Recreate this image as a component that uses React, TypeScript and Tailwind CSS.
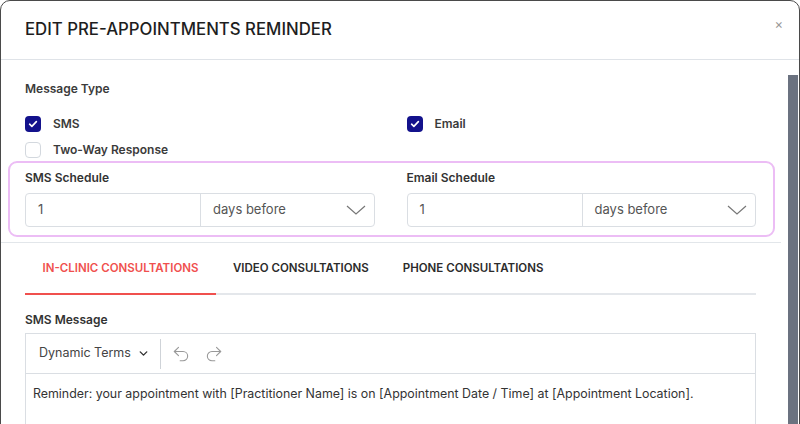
import { Undo2, Redo2, ChevronDown } from 'lucide-react';

const font = { fontFamily: 'Inter, "Liberation Sans", sans-serif' };

function Check({ checked, label }: { checked?: boolean; label: string }) {
  return (
    <div className="flex flex-1 items-center gap-[12px]">
      {checked ? (
        <span className="flex h-[16px] w-[16px] items-center justify-center rounded-[4px] bg-[#13128c]">
          <svg viewBox="0 0 16 16" className="h-[12px] w-[12px]">
            <path d="M3.5 8.3l3 2.8 6-6.2" fill="none" stroke="white" strokeWidth="2.2" strokeLinecap="round" strokeLinejoin="round" />
          </svg>
        </span>
      ) : (
        <span className="h-[16px] w-[16px] rounded-[4px] border border-[#d3d8de] bg-white" />
      )}
      <span className="text-[12px] font-semibold text-[#3b3b3b]">{label}</span>
    </div>
  );
}

function Schedule({ label }: { label: string }) {
  return (
    <div className="flex flex-1 flex-col">
      <span className="text-[12px] font-semibold text-[#333]">{label}</span>
      <div className="mt-[6px] flex h-[34px] rounded-[4px] border border-[#dadee3]">
        <div className="flex w-[175px] items-center border-r border-[#dadee3] pl-[12px] text-[13px] text-[#555]">1</div>
        <div className="flex flex-1 items-center justify-between pl-[12px] pr-[8px] text-[13px] text-[#555]">
          <span>days before</span>
          <svg viewBox="0 0 20 10" className="h-[10px] w-[20px]">
            <polyline points="1,1 10,9 19,1" fill="none" stroke="#777" strokeWidth="1.2" />
          </svg>
        </div>
      </div>
    </div>
  );
}

export default function App() {
  return (
    <div style={font} className="h-[424px] w-[800px] overflow-hidden bg-white">
      <div className="flex h-[440px] flex-col rounded-[10px] border border-[#4a4a4a] bg-white">
        <div className="flex h-[59px] shrink-0 items-center justify-between border-b border-[#dfe3e8] pl-[24px] pr-[16px]">
          <h1 className="text-[16.8px] font-medium text-[#1e1e1e]">EDIT PRE-APPOINTMENTS REMINDER</h1>
          <span className="mb-[10px] text-[13px] text-[#999]">×</span>
        </div>

        <div className="flex flex-1">
          <div className="flex-1">
            <div className="pl-[24px] pr-[25px]">
              <div className="pt-[20px] text-[12px] font-semibold text-[#3b3b3b]">Message Type</div>
              <div className="mt-[17px] flex gap-[32px]">
                <Check checked label="SMS" />
                <Check checked label="Email" />
              </div>
              <div className="mt-[8px]">
                <Check label="Two-Way Response" />
              </div>
              <div className="-ml-[17px] -mr-[19px] mt-[2px] flex gap-[32px] rounded-[9px] border-2 border-[#ecbdf5] pb-[8px] pl-[15px] pr-[17px] pt-[6px]">
                <Schedule label="SMS Schedule" />
                <Schedule label="Email Schedule" />
              </div>
            </div>

            <div className="mt-[5px] border-t border-[#e2e6ea]" />

            <div className="pl-[24px] pr-[25px]">
              <div className="mt-[17px] flex border-b-2 border-[#e4e7eb] text-[11.5px] font-semibold text-[#2b2b2b]">
                <div className="-mb-[2px] w-[191px] border-b-2 border-[#f0504e] pb-[16px] text-center text-[#f0504e]">IN-CLINIC CONSULTATIONS</div>
                <div className="pl-[17px] pb-[16px]">VIDEO CONSULTATIONS</div>
                <div className="pl-[34px] pb-[16px]">PHONE CONSULTATIONS</div>
              </div>

              <div className="mt-[16px] text-[12px] font-semibold text-[#333]">SMS Message</div>
              <div className="mt-[4px] border border-[#dadee3]">
                <div className="flex h-[40px] items-center border-b border-[#dadee3] pl-[13px]">
                  <span className="text-[12.5px] text-[#444]">Dynamic Terms</span>
                  <ChevronDown className="ml-[6px] h-[13px] w-[13px] text-[#333]" strokeWidth={2.6} />
                  <span className="ml-[10px] h-[30px] w-px bg-[#cfd3d8]" />
                  <Undo2 className="ml-[10px] h-[20px] w-[20px] text-[#999]" strokeWidth={1.3} />
                  <Redo2 className="ml-[13px] h-[20px] w-[20px] text-[#999]" strokeWidth={1.3} />
                </div>
                <div className="h-[60px] px-[7px] pt-[11px] text-[12.4px] text-[#333]">
                  Reminder: your appointment with [Practitioner Name] is on [Appointment Date / Time] at [Appointment Location].
                </div>
              </div>
            </div>
          </div>

          <div className="w-[18px] pt-[15px]">
            <div className="ml-[7px] h-full w-[10px] bg-[#6b7280]" />
          </div>
        </div>
      </div>
    </div>
  );
}
